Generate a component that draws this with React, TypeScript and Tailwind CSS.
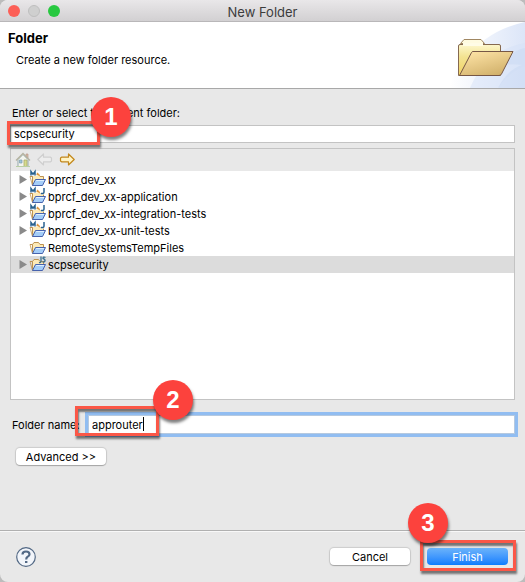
import type { ReactNode } from "react";

type Kind = "maven" | "mavenJava" | "plain" | "js";

const projects: { name: string; kind: Kind; selected?: boolean }[] = [
  { name: "bprcf_dev_xx", kind: "maven" },
  { name: "bprcf_dev_xx-application", kind: "mavenJava" },
  { name: "bprcf_dev_xx-integration-tests", kind: "mavenJava" },
  { name: "bprcf_dev_xx-unit-tests", kind: "mavenJava" },
  { name: "RemoteSystemsTempFiles", kind: "plain" },
  { name: "scpsecurity", kind: "js", selected: true },
];

function ProjectIcon({ kind }: { kind: Kind }) {
  const maven = kind === "maven" || kind === "mavenJava";
  return (
    <svg className="h-4 w-4 shrink-0 overflow-visible" viewBox="0 0 16 16" aria-hidden="true">
      <path d="M0 4.5H2.5M2.5 13.5V4.5L4 2.5H8.5L10 4.5H13.5V8" fill="#fdeab6" stroke="#bd9352" />
      <path d="M0 4.5L2.5 13.5" fill="none" stroke="#bd9352" strokeWidth="0.8" />
      <path d="M2.5 13.5L5.5 7.5H15.5L12.5 13.5Z" fill="#a4cdf8" stroke="#4763ae" strokeLinejoin="round" />
      <path d="M6.2 8.5H14" stroke="#dff0ff" />
      {maven && (
        <>
          <path d="M0 -1H6.5V4H0Z" fill="#ffffff" />
          <path d="M1 3.5V-0.5L3 2.2L5 -0.5V3.5" fill="none" stroke="#28618f" strokeWidth="1.5" />
          <path d="M7 1L9.5 3.5" stroke="#e0953c" strokeWidth="1.3" />
        </>
      )}
      {kind === "mavenJava" && (
        <>
          <path d="M10.5 -1H15.5V5.5H10.5Z" fill="#ffffff" />
          <path d="M14 -1V3Q14 5 11 4.4" fill="none" stroke="#28618f" strokeWidth="1.5" />
        </>
      )}
      {kind === "js" && (
        <path
          d="M11 -0.5V4.5Q11 6 9 5.3M15.5 0.5Q13 -0.5 13 1.3Q15.5 2.5 15 4Q14.5 5.5 12.5 4.8"
          fill="none"
          stroke="#3b7090"
          strokeWidth="1.3"
        />
      )}
    </svg>
  );
}

function HomeIcon() {
  return (
    <svg className="h-4 w-4" viewBox="0 0 16 16" aria-hidden="true">
      <path d="M11 2H13V6H11Z" fill="#d8b7a5" stroke="#b79b8d" strokeWidth="0.7" />
      <path d="M3 7.5L8 2.5L13 7.5V14.5H3Z" fill="#f3f5ee" stroke="#94a9ae" />
      <path d="M1 8.5L8 1.5L15 8.5" fill="none" stroke="#b5b3a0" strokeWidth="1.3" />
      <path d="M4.5 8H7V11H4.5Z" fill="#9fc5dc" stroke="#7d9eaf" strokeWidth="0.7" />
      <path d="M9 8H12V14.5H9Z" fill="#d6dc8c" stroke="#a9a970" strokeWidth="0.8" />
      <path d="M1 14.5H15" stroke="#b9cfa5" />
    </svg>
  );
}

function ArrowIcon({ back = false }: { back?: boolean }) {
  return (
    <svg className="h-4 w-4" viewBox="0 0 16 16" aria-hidden="true">
      <path
        d={
          back
            ? "M0.8 7.5L6.5 2V5.2H13.5L14.5 6V9L13.5 9.8H6.5V13Z"
            : "M15.2 7.5L9.5 2V5.2H2.5L1.5 6V9L2.5 9.8H9.5V13Z"
        }
        fill={back ? "#ededed" : "#fff3c4"}
        stroke={back ? "#cfcfcf" : "#c2871a"}
        strokeWidth="1.2"
        strokeLinejoin="round"
      />
    </svg>
  );
}

function BannerArt() {
  return (
    <svg className="h-[66px] w-[75px] shrink-0" viewBox="0 0 75 66" role="img" aria-label="Open folder">
      <defs>
        <linearGradient id="sky" x1="0" x2="1" y1="0" y2="0">
          <stop offset="0" stopColor="#ffffff" />
          <stop offset="1" stopColor="#d3dff6" />
        </linearGradient>
        <linearGradient id="back" x1="0" x2="0" y1="0" y2="1">
          <stop offset="0" stopColor="#fdf7cc" />
          <stop offset="0.4" stopColor="#f3e391" />
          <stop offset="1" stopColor="#f1d264" />
        </linearGradient>
        <linearGradient id="front" x1="0.2" x2="0.8" y1="0" y2="1">
          <stop offset="0" stopColor="#fde3a5" />
          <stop offset="1" stopColor="#cfae68" />
        </linearGradient>
      </defs>
      <path d="M0 66Q2 48 16 36Q38 8 75 0V66Z" fill="url(#sky)" opacity="0.8" />
      <path d="M20 66Q36 28 75 21V44Q60 49 48 66Z" fill="#d5e1f7" opacity="0.5" />
      <path d="M48 66Q57 48 72 43Q60 41 50 44Q62 28 75 26V66Z" fill="#cbdaf4" opacity="0.6" />
      <path d="M10.5 21.5L14 17.5H31L34.5 21.5Z" fill="#fffbe0" stroke="#a08762" strokeLinejoin="round" />
      <path d="M8.5 24Q8.5 22.5 10 22.5H49Q50.5 22.5 50.5 24V53.5H8.5Z" fill="url(#back)" stroke="#856950" strokeLinejoin="round" />
      <path d="M13 22.5H33" stroke="#fffce6" strokeWidth="3" />
      <path d="M9.5 53.5L21.5 30.5Q22 29.5 23 29.5H63L51.5 52Q50.5 53.5 49 53.5Z" fill="url(#front)" stroke="#765746" strokeLinejoin="round" />
    </svg>
  );
}

/* Numbered tutorial marker; the parent positions it. */
function Step({ n, className }: { n: number; className: string }) {
  return (
    <span
      className={`absolute z-20 flex size-10 items-center justify-center rounded-full bg-[#fc423d] font-['Liberation_Sans',sans-serif] text-2xl font-bold text-white shadow-[1px_3px_3px_rgba(0,0,0,0.5)] ${className}`}
    >
      {n}
    </span>
  );
}

function Outline({ className }: { className: string }) {
  return (
    <span
      className={`pointer-events-none absolute z-10 border-3 border-[#fb5747] shadow-[1px_3px_2px_rgba(0,0,0,0.5),inset_1px_3px_2px_rgba(0,0,0,0.5)] ${className}`}
    />
  );
}

function PushButton({ children, className = "" }: { children: ReactNode; className?: string }) {
  return (
    <button
      type="button"
      className={`h-[17px] rounded bg-white text-center leading-4 shadow-[0_0_1px_1px_rgba(0,0,0,0.12),0_1px_1px_rgba(0,0,0,0.2)] ${className}`}
    >
      {children}
    </button>
  );
}

export default function App() {
  return (
    <div className="bg-[#bcbcbc]">
      <form className="flex min-h-screen flex-col overflow-hidden rounded-lg bg-[#e8e8e8] font-[Inter,sans-serif] text-[11px] text-black">
        <div className="relative flex h-[22px] items-center justify-center border-b border-[#b9b7b9] bg-linear-to-b from-[#e9e7e9] to-[#d2d0d2]">
          <div className="absolute left-2 flex gap-2">
            <button type="button" aria-label="Close" className="size-3 rounded-full bg-[#fc5f57]" />
            <button type="button" aria-label="Minimize" className="size-3 rounded-full border border-[#bebebe] bg-[#cfcfcf]" />
            <button type="button" aria-label="Zoom" className="size-3 rounded-full bg-[#28c840]" />
          </div>
          <span className="pt-1 text-[13px] text-[#3c3c3c]">New Folder</span>
        </div>

        <header className="flex justify-between border-b border-[#a8a8a8] bg-white">
          <div className="pt-2 pl-2">
            <h1 className="text-[13px] leading-4 font-bold">Folder</h1>
            <p className="mt-1 pl-2 leading-5">Create a new folder resource.</p>
          </div>
          <BannerArt />
        </header>

        <main className="flex flex-1 flex-col px-2.5 pt-4">
          <label htmlFor="parent" className="pl-0.5 leading-4">
            Enter or select the parent folder:
          </label>
          <div className="relative mt-1 flex">
            <input
              id="parent"
              defaultValue="scpsecurity"
              className="h-[18px] w-full border border-[#c3c3c3] bg-white px-[3px] outline-none"
            />
            <Outline className="-top-1 -left-[3px] h-6 w-[93px]" />
            <Step n={1} className="-top-7 left-[81px]" />
          </div>

          <section className="mt-[5px] h-[252px] border border-[#c3c3c3] bg-white">
            <div className="flex h-[22px] items-center gap-1.5 bg-[#e8e8e8] pl-1">
              <button type="button" aria-label="Home"><HomeIcon /></button>
              <button type="button" aria-label="Back" disabled><ArrowIcon back /></button>
              <button type="button" aria-label="Forward"><ArrowIcon /></button>
            </div>
            <ul role="tree" aria-label="Projects">
              {projects.map((p) => (
                <li
                  key={p.name}
                  role="treeitem"
                  aria-selected={!!p.selected}
                  className={`flex h-[17px] items-center pl-2 leading-4 ${p.selected ? "bg-[#dcdcdc]" : ""}`}
                >
                  <svg className="mr-[3px] h-[9px] w-2" viewBox="0 0 8 9" aria-hidden="true">
                    {p.kind !== "plain" && <path d="M0.5 0L8 4.5L0.5 9Z" fill="#8a8a8a" />}
                  </svg>
                  <ProjectIcon kind={p.kind} />
                  <span className="ml-0.5">{p.name}</span>
                </li>
              ))}
            </ul>
          </section>

          <div className="mt-[15px] flex items-center">
            <label htmlFor="folder-name" className="w-[78px] pl-0.5 leading-4 whitespace-nowrap">
              Folder name:
            </label>
            <div className="relative flex flex-1">
              <input
                id="folder-name"
                defaultValue="approuter"
                className="h-[19px] w-full border border-[#b5c9e0] bg-white px-[3px] outline-none ring-3 ring-[#91bdf1]"
              />
              <span className="absolute top-0.5 left-[55px] h-3.5 w-px bg-black" />
              <Outline className="-top-[9px] -left-[13px] h-[30px] w-[84px]" />
              <Step n={2} className="-top-[35px] left-[65px]" />
            </div>
          </div>

          <div className="mt-3.5 ml-1.5 flex">
            <PushButton className="w-[90px]">Advanced &gt;&gt;</PushButton>
          </div>
        </main>

        <footer className="flex h-[52px] items-center justify-between border-t border-[#b0b0b0] pr-[17px] pl-4 shadow-[inset_0_1px_0_#f8f8f8]">
          <button type="button" aria-label="Help" className="size-5">
            <svg viewBox="0 0 20 20" className="size-5" fill="none" stroke="#536985">
              <circle cx="10" cy="10" r="9.3" fill="#f2f5fa" strokeWidth="1.2" />
              <path d="M6.5 7.5Q6.5 4.5 10 4.5Q13.5 4.5 13.5 7.2Q13.5 9 11.6 9.8Q10.2 10.5 10.2 12.5" strokeWidth="2.2" />
              <path d="M9 15H11.4" strokeWidth="2.2" />
            </svg>
          </button>
          <div className="flex gap-[17px]">
            <PushButton className="w-20">Cancel</PushButton>
            <div className="relative flex">
              <button
                type="submit"
                className="h-[17px] w-[81px] rounded bg-linear-to-b from-[#6bb3fa] to-[#077dff] leading-4 text-white"
              >
                Finish
              </button>
              <Outline className="-top-2 -left-[7px] h-[31px] w-24" />
              <Step n={3} className="-top-[45px] -left-[19px]" />
            </div>
          </div>
        </footer>
      </form>
    </div>
  );
}
